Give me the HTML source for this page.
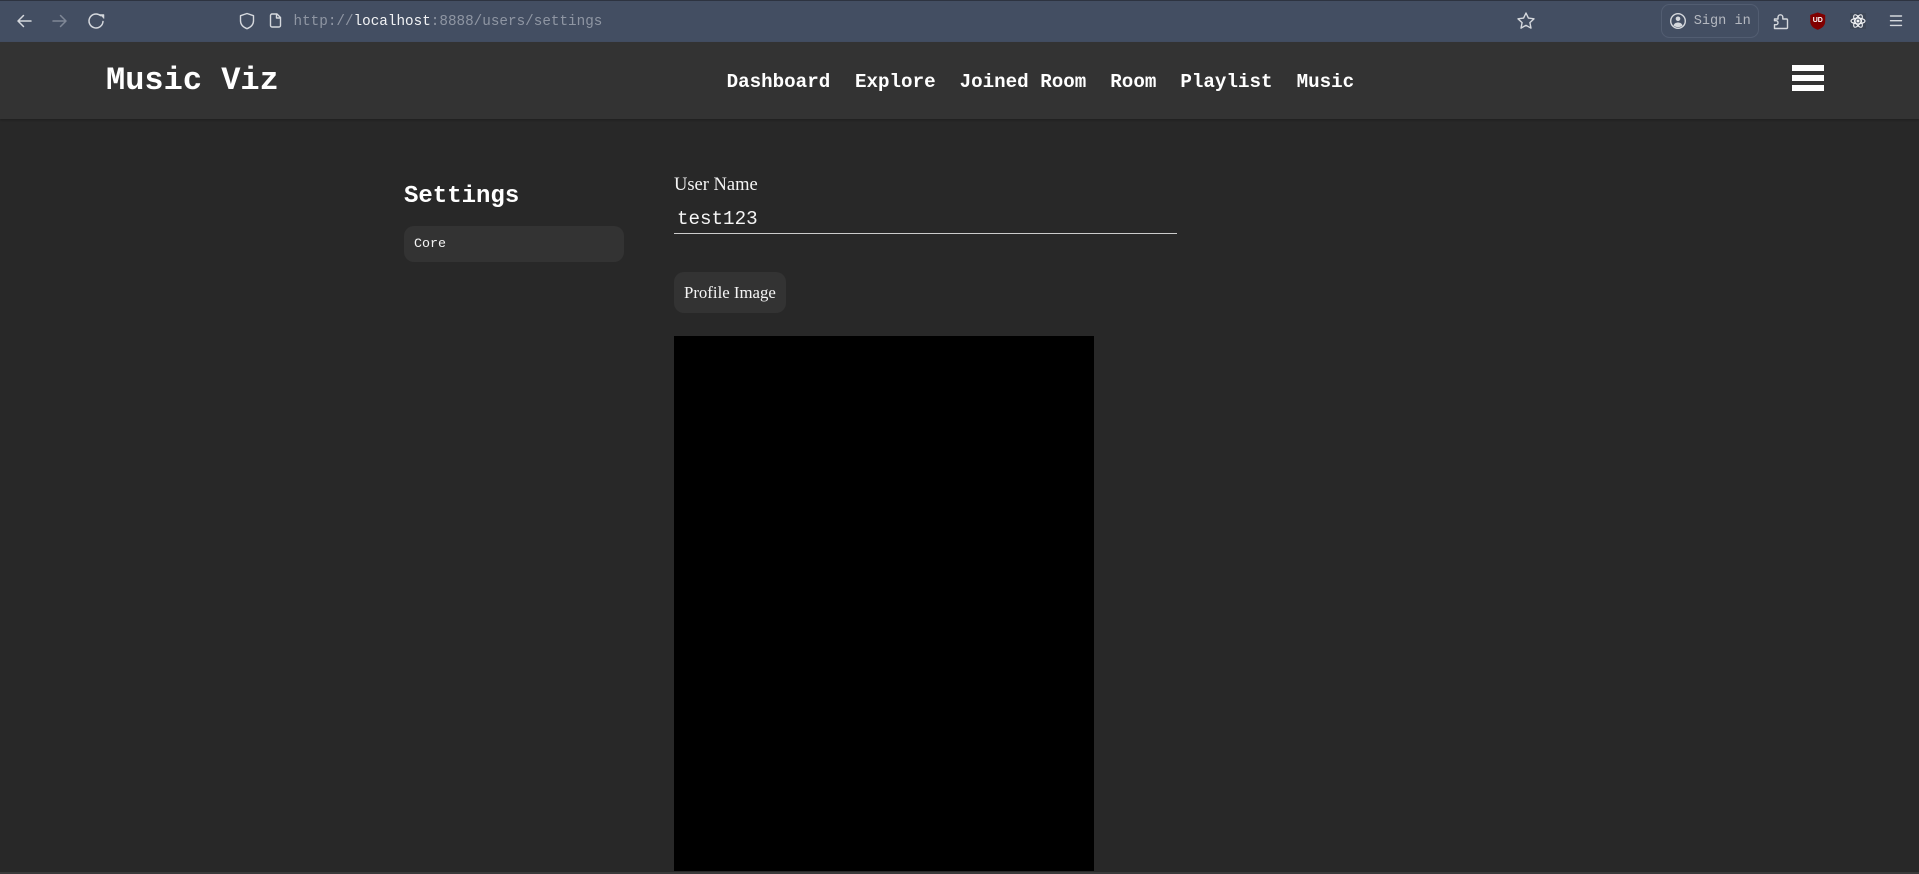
<!DOCTYPE html>
<html lang="en">
<head>
<meta charset="utf-8">
<title>Music Viz</title>
<style>
html,body{margin:0;padding:0;width:1919px;height:874px;overflow:hidden;background:#282828;}
body{position:relative;font-family:"Liberation Mono",monospace;color:#fff;}
.a{position:absolute;white-space:pre;line-height:1;}
#tb{position:absolute;left:0;top:0;width:1919px;height:42px;background:#434e62;border-top:1px solid #2d3340;box-sizing:border-box;}
#nav{position:absolute;left:0;top:42px;width:1919px;height:77px;background:#333;box-shadow:0 1px 2px rgba(0,0,0,.25);}
svg{position:absolute;overflow:visible;}
.nl{font-weight:700;font-size:19.2px;top:73px;}
.serif{font-family:"Liberation Serif","Noto Serif CJK SC",serif;}
</style>
</head>
<body>
<div id="tb"></div>
<div id="nav"></div>

<svg style="left:0;top:0" width="320" height="42" fill="none" stroke-linecap="round" stroke-linejoin="round">
  <path d="M31 21H18M23.5 15.500L18 21l5.500 5.500" stroke="#d5d8dd" stroke-width="1.500"/>
  <path d="M53 21H66M60.500 15.500L66 21l-5.500 5.500" stroke="#7f8796" stroke-width="1.500"/>
  <path d="M100.500 15.600A7 7 0 1 0 103 21.500" stroke="#d5d8dd" stroke-width="1.500"/>
  <path d="M100 14.500h4v4z" fill="#d5d8dd" stroke="#d5d8dd" stroke-width=".5"/>
  <path d="M247 13.500l6.500 2.200v5c0 3.800-2.800 6.500-6.500 8-3.700-1.500-6.500-4.200-6.500-8v-5z" stroke="#d5d8dd" stroke-width="1.400"/>
  <path d="M270.500 15.500a1.500 1.500 0 0 1 1.500-1.500h5l3.500 3.500v8a1.500 1.500 0 0 1-1.500 1.500h-7a1.500 1.500 0 0 1-1.500-1.500zM276.500 14v4h4" stroke="#d5d8dd" stroke-width="1.400"/>
</svg>
<div class="a" style="left:293.500px;top:15px;font-size:14.300px;color:#8f96a3">http://<span style="color:#f2f3f5">localhost</span>:8888/users/settings</div>

<svg style="left:1500px;top:0" width="419" height="42" fill="none" stroke-linecap="round" stroke-linejoin="round">
  <path d="M26 13l2.400 5.100 5.600.700-4.100 3.800 1.100 5.500-5-2.800-5 2.800 1.100-5.500-4.100-3.800 5.600-.700z" stroke="#d5d8dd" stroke-width="1.400"/>
  <rect x="161.500" y="4.500" width="97" height="33" rx="8" stroke="#525d71" stroke-width="1"/>
  <circle cx="178" cy="21" r="7.300" stroke="#d5d8dd" stroke-width="1.400"/>
  <circle cx="178" cy="18.800" r="2.300" fill="#d5d8dd"/>
  <path d="M173.500 25.500c.6-2 2.400-3 4.500-3s3.900 1 4.500 3a7 7 0 0 1-9 0z" fill="#d5d8dd"/>
  <path d="M275 19.500h3.500v-1.800a2.400 2.400 0 0 1 4.800 0v1.800h3.700a1 1 0 0 1 1 1v7.800a.7.700 0 0 1-.7.700h-12.300v-3.800h1.500a2 2 0 0 0 0-4h-1.500z" transform="translate(-.5 -.5)" stroke="#d5d8dd" stroke-width="1.400"/>
  <path d="M317.700 13l7 2.300v6c0 3.900-3 6.600-7 8-4-1.400-7-4.100-7-8v-6z" fill="#800000" stroke="#800000"/>
  <rect x="350" y="13" width="16" height="16" fill="#3e4757"/>
  <g stroke="#f2f3f5" stroke-width="1.100"><ellipse cx="358" cy="21" rx="7" ry="2.900"/><ellipse cx="358" cy="21" rx="7" ry="2.900" transform="rotate(60 358 21)"/><ellipse cx="358" cy="21" rx="7" ry="2.900" transform="rotate(120 358 21)"/></g>
  <circle cx="358" cy="21" r="1.500" fill="#f2f3f5"/>
  <path d="M390.500 16h11M390.500 20.700h11M390.500 25.400h11" stroke="#d5d8dd" stroke-width="1.400"/>
</svg>
<div class="a" style="left:1693.700px;top:15px;font-size:13.600px;color:#b4b8c0">Sign in</div>
<div class="a" style="left:1812.700px;top:17px;font-size:7px;font-weight:700;color:#fff;font-family:'Liberation Sans',sans-serif">UD</div>

<div class="a" style="left:106px;top:64.500px;font-size:32px;font-weight:700">Music Viz</div>
<div class="a nl" style="left:726.600px">Dashboard</div>
<div class="a nl" style="left:855px">Explore</div>
<div class="a nl" style="left:959.600px">Joined Room</div>
<div class="a nl" style="left:1110.300px">Room</div>
<div class="a nl" style="left:1180.400px">Playlist</div>
<div class="a nl" style="left:1296.600px">Music</div>
<div style="position:absolute;left:1792px;top:65px;width:32px;height:6px;background:#fff"></div>
<div style="position:absolute;left:1792px;top:75px;width:32px;height:6px;background:#fff"></div>
<div style="position:absolute;left:1792px;top:85px;width:32px;height:6px;background:#fff"></div>

<div class="a" style="left:404px;top:185px;font-size:24px;font-weight:700">Settings</div>
<div style="position:absolute;left:404px;top:226px;width:220px;height:36px;background:#333;border-radius:10px"></div>
<div class="a" style="left:414px;top:238px;font-size:13.330px;color:#f4f4f4">Core</div>

<div class="a serif" style="left:674px;top:176px;font-size:18.500px;color:#f5f5f5">User Name</div>
<div class="a" style="left:677px;top:210px;font-size:19.200px;color:#f5f5f5">test123</div>
<div style="position:absolute;left:674px;top:233px;width:503px;height:1px;background:#ccc"></div>

<div style="position:absolute;left:674px;top:272px;width:112px;height:41px;background:#333;border-radius:10px"></div>
<div class="a serif" style="left:684px;top:285px;font-size:16.800px;color:#f5f5f5">Profile Image</div>

<div style="position:absolute;left:674px;top:336px;width:420px;height:535px;background:#000"></div>
<div style="position:absolute;left:0;top:872px;width:1919px;height:2px;background:#3a3a3a"></div>
</body>
</html>
